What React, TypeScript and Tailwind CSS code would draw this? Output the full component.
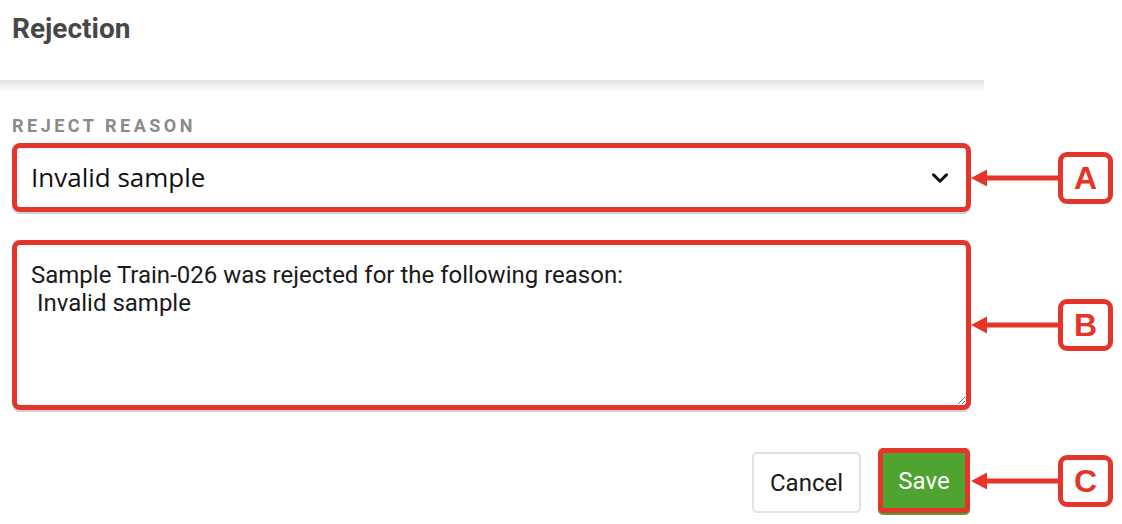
import { ChevronDown } from 'lucide-react';

const RED = 'border-[#e5342a]';

const Callout = ({ letter }: { letter: string }) => (
    <div className="flex items-center">
        <svg width="87" height="18" viewBox="0 0 87 18" className="shrink-0">
            <polygon points="0,9 16,0.5 16,17.5" fill="#e5342a" />
            <rect x="14" y="6.5" width="73" height="5" fill="#e5342a" />
        </svg>
        <div
            className={`w-[55px] h-[52px] rounded-[9px] border-[5px] ${RED} flex items-center justify-center text-[#e5342a] text-[32px] font-bold leading-none`}
            style={{ fontFamily: '"Liberation Sans", Arial, sans-serif' }}
        >
            {letter}
        </div>
    </div>
);

const App = () => {
    return (
        <div className="w-[1122px] h-[524px] bg-white overflow-hidden font-['Roboto',sans-serif]">
            {/* dialog header */}
            <div className="w-[984px] h-[80px] pl-[12px] pt-[13px]">
                <h1 className="text-[28px] leading-[32px] font-bold text-[#474747]">Rejection</h1>
            </div>
            <div className="w-[984px] h-[12px] bg-gradient-to-b from-[#e1e1e1] to-white" />

            <div className="pl-[12px]">
                <div className="mt-[24px] text-[18px] leading-[20px] font-bold tracking-[3.5px] text-[#8a8a8a]">
                    REJECT REASON
                </div>

                {/* A: select */}
                <div className="mt-[7px] flex items-center">
                    <div className={`w-[959px] h-[69px] rounded-[8px] border-[5px] ${RED} bg-white flex items-center justify-between pl-[14px] pr-[13px] shadow-[0_2px_0_#d0d0d0]`}>
                        <span className="font-['Open_Sans',sans-serif] text-[26px] text-[#111]">Invalid sample</span>
                        <ChevronDown className="w-[26px] h-[26px] text-[#111]" strokeWidth={2.8} />
                    </div>
                    <Callout letter="A" />
                </div>

                {/* B: message */}
                <div className="mt-[28px] flex items-center">
                    <textarea
                        readOnly
                        value={'Sample Train-026 was rejected for the following reason:\n Invalid sample'}
                        className={`w-[959px] h-[170px] rounded-[8px] border-[5px] ${RED} bg-white pl-[14px] pt-[16px] text-[24px] leading-[28px] text-[#1a1a1a] outline-none resize-y shadow-[0_2px_0_#d0d0d0]`}
                    />
                    <Callout letter="B" />
                </div>

                {/* C: actions */}
                <div className="mt-[38px] flex items-center">
                    <div className="w-[959px] flex items-end justify-end gap-[17px]">
                        <button className="w-[109px] h-[61px] rounded-[5px] border-2 border-[#e2e2e2] bg-white text-[24px] text-[#1a1a1a]">
                            Cancel
                        </button>
                        <button className={`w-[92px] h-[65px] rounded-[5px] border-[5px] ${RED} bg-[#4ea331] text-[24px] text-white mr-[1px] shadow-[0_2px_0_#4ea331]`}>
                            Save
                        </button>
                    </div>
                    <Callout letter="C" />
                </div>
            </div>
        </div>
    );
};

export default App;
